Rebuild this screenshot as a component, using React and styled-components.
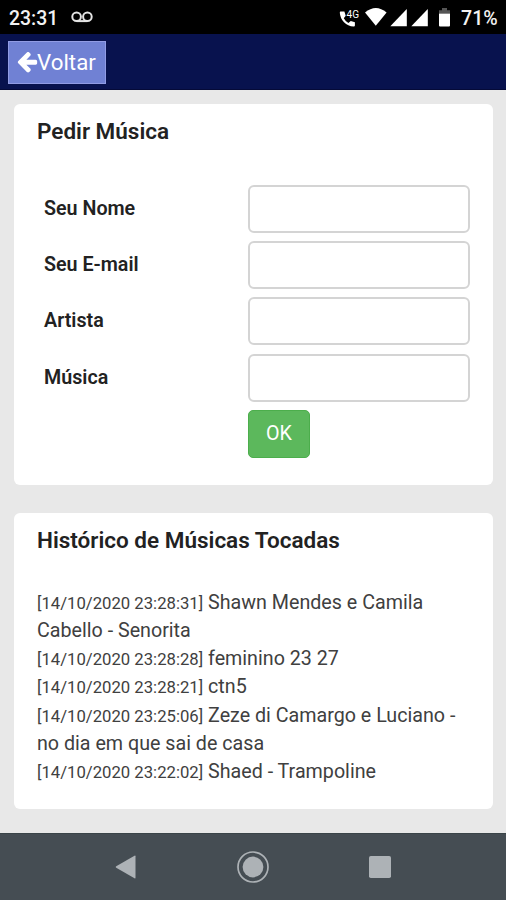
import React from 'react';
import styled, { createGlobalStyle } from 'styled-components';

const fields = [
  { id: 'nome', label: 'Seu Nome' },
  { id: 'email', label: 'Seu E-mail' },
  { id: 'artista', label: 'Artista' },
  { id: 'musica', label: 'Música' },
];

const history = [
  { time: '14/10/2020 23:28:31', song: 'Shawn Mendes e Camila Cabello - Senorita' },
  { time: '14/10/2020 23:28:28', song: 'feminino 23 27' },
  { time: '14/10/2020 23:28:21', song: 'ctn5' },
  { time: '14/10/2020 23:25:06', song: 'Zeze di Camargo e Luciano - no dia em que sai de casa' },
  { time: '14/10/2020 23:22:02', song: 'Shaed - Trampoline' },
];

const App = () => {
  return (
    <Screen>
      <GlobalStyle />
      <StatusBar>
        <Clock>23:31</Clock>
        <Voicemail />
        <StatusIcons />
        <Battery>71%</Battery>
      </StatusBar>

      <NavBar>
        <BackButton type="button">
          <ArrowLeft />
          Voltar
        </BackButton>
      </NavBar>

      <Content>
        <Card $height="381px">
          <CardTitle>Pedir Música</CardTitle>
          <Form onSubmit={(e) => e.preventDefault()}>
            {fields.map((field) => (
              <FormRow key={field.id}>
                <Label htmlFor={field.id}>{field.label}</Label>
                <Input id={field.id} name={field.id} />
              </FormRow>
            ))}
            <FormRow>
              <span />
              <SubmitButton type="submit">OK</SubmitButton>
            </FormRow>
          </Form>
        </Card>

        <Card $height="296px">
          <CardTitle>Histórico de Músicas Tocadas</CardTitle>
          <History>
            {history.map((item) => (
              <HistoryItem key={item.time}>
                <Time>{`[${item.time}]`}</Time> {item.song}
              </HistoryItem>
            ))}
          </History>
        </Card>
      </Content>

      <SystemBar>
        <svg width="22" height="24" viewBox="0 0 22 24">
          <path d="M20.500 1.200v21.600q0 1-1 .5L1.200 12.700q-1.100-.7 0-1.400L19.500.7q1-.5 1 .5Z" fill="#adb2b6" />
        </svg>
        <svg width="32" height="32" viewBox="0 0 32 32">
          <circle cx="16" cy="16" r="15" fill="none" stroke="#adb2b6" strokeWidth="1.7" />
          <circle cx="16" cy="16" r="10.4" fill="#adb2b6" />
        </svg>
        <svg width="22" height="22" viewBox="0 0 22 22">
          <rect width="22" height="22" rx="1.8" fill="#adb2b6" />
        </svg>
      </SystemBar>
    </Screen>
  );
};

const ArrowLeft = () => (
  <svg width="21" height="21" viewBox="0 -50 1600 1560">
    <path
      d="M1536 640v128q0 53-32.500 90.500t-84.500 37.500h-704l293 294q38 36 38 90t-38 90l-75 76q-37 37-90 37-52 0-91-37l-651-652q-37-37-37-90 0-52 37-91l651-650q38-38 91-38 52 0 90 38l75 74q38 38 38 91t-38 91l-293 293h704q52 0 84.500 37.500t32.500 90.500z"
      fill="currentColor"
    />
  </svg>
);

const Voicemail = () => (
  <svg width="22" height="12" viewBox="0 0 22 12">
    <g fill="none" stroke="#e4e4e4" strokeWidth="2">
      <circle cx="5.6" cy="5.8" r="4.3" />
      <circle cx="16.4" cy="5.8" r="4.3" />
      <path d="M5.6 10.1h10.8" />
    </g>
  </svg>
);

const StatusIcons = () => (
  <StatusSvg width="114" height="22" viewBox="338 6 114 22">
    <g fill="#fff">
      <path d="M340.800 11.500q-1.100 0-1 1.200.4 5.600 4.200 9.500 3.900 3.900 9.700 4.400 1.200.1 1.200-1v-3.400l-4.100-1.300-2.400 2q-3.100-1.700-4.600-4.700l1.900-2.400-1.300-4.300Z" />
      <text x="346.600" y="17.800" fontFamily="Roboto, sans-serif" fontSize="10.500" textLength="12.500" lengthAdjust="spacingAndGlyphs">4G</text>
      <path d="M365 12.500q10.800-9 21.600 0L375.800 25.700Z" />
      <path d="M390.300 26.300 406.800 9v17.300Z" />
      <path d="M411.300 26.300 427.800 9v17.300Z" />
      <path d="M439 13.200v-3h3V8h5v2.200h3v3Z" fill="#555" />
      <path d="M439 13.500h11v12q0 1-1 1h-9q-1 0-1-1Z" />
    </g>
  </StatusSvg>
);

const GlobalStyle = createGlobalStyle`
  * {
    box-sizing: border-box;
  }

  body {
    margin: 0;
    font-family: Roboto, 'Liberation Sans', sans-serif;
    font-size: 19.68px;
    line-height: 28.1px;
    color: #404040;
  }
`;

const Screen = styled.div`
  display: flex;
  flex-direction: column;
  width: 506px;
  height: 900px;
  background: #e8e8e8;
  overflow: hidden;
`;

const StatusBar = styled.div`
  display: flex;
  align-items: center;
  height: 34px;
  padding: 0 8px 0 9px;
  background: #000;
  color: #f2f2f2;
`;

const Clock = styled.span`
  width: 62px;
  padding-top: 4px;
  font-size: 19.4px;
  font-weight: 500;
`;

const StatusSvg = styled.svg`
  margin-left: auto;
`;

const Battery = styled.span`
  width: 37px;
  margin-left: 9px;
  padding-top: 4px;
  font-size: 19.6px;
  font-weight: 500;
  white-space: nowrap;
`;

const NavBar = styled.nav`
  height: 56px;
  padding: 7px 8px;
  background: #08124e;
  border-bottom: 1px solid #050a38;
`;

const BackButton = styled.button`
  display: flex;
  align-items: center;
  width: 98px;
  height: 43px;
  padding: 0 0 0 8px;
  border: 1px solid #919ce4;
  background: #7081d4;
  color: #fff;
  font-family: inherit;
  font-size: 22.3px;
  line-height: 1;

  svg {
    flex-shrink: 0;
    margin-right: -1px;
  }
`;

const Content = styled.main`
  display: flex;
  flex-direction: column;
  flex: 1;
  gap: 28px;
  padding: 14px 13px 0 14px;
`;

const Card = styled.section`
  height: ${(props) => props.$height};
  padding: 13px 23px 0;
  border-radius: 6px;
  background: #fff;
`;

const CardTitle = styled.h2`
  margin: 0 0 40px;
  color: #222;
  font-size: 22.5px;
  font-weight: 600;
  line-height: 28px;
`;

const Form = styled.form`
  display: grid;
  gap: 8.2px;
`;

const FormRow = styled.div`
  display: grid;
  grid-template-columns: 204px 222px;
  align-items: center;
  padding-left: 7px;
`;

const Label = styled.label`
  color: #222;
  font-weight: 600;
  font-size: 19.68px;
`;

const Input = styled.input`
  width: 222px;
  height: 48px;
  padding: 8px 16px;
  border: 2px solid #d4d4d4;
  border-radius: 6px;
  background: #fff;
  font: inherit;
`;

const SubmitButton = styled.button`
  width: 62px;
  height: 48px;
  padding: 0;
  border: 1.4px solid #4cae4c;
  border-radius: 5px;
  background: #5cb85c;
  color: #fff;
  font-family: inherit;
  font-size: 19.7px;
`;

const History = styled.div`
  margin-top: -5px;
`;

const HistoryItem = styled.div`
  line-height: 28.15px;
`;

const Time = styled.small`
  font-size: 16.7px;
  line-height: 1;
`;

const SystemBar = styled.footer`
  display: flex;
  align-items: center;
  justify-content: space-between;
  height: 67px;
  padding: 0 115px;
  border-top: 1px solid #3a4448;
  background: #454d53;
`;

export default App;
